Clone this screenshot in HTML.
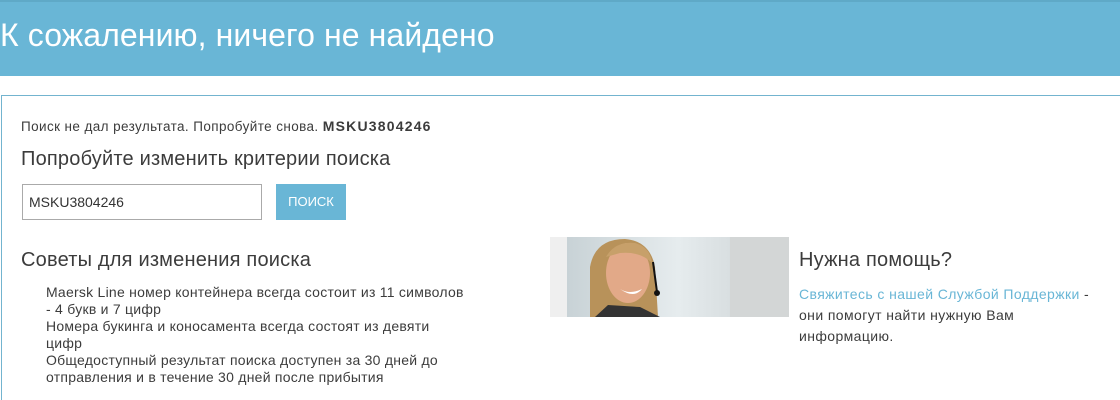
<!DOCTYPE html>
<html><head><meta charset="utf-8"><style>
*{margin:0;padding:0;box-sizing:border-box}
html,body{width:1120px;height:400px;overflow:hidden}
body{background:#fff;font-family:"Liberation Sans","DejaVu Sans",sans-serif;color:#3c3c3c;position:relative}
.hdr{position:absolute;left:0;top:0;width:1120px;height:76px;background:#69b6d6;border-top:2px solid #5fa9c7}
.hdr h1{position:absolute;left:0;top:15px;font-weight:normal;font-size:32px;color:#fff;letter-spacing:0.1px}
.box{position:absolute;left:1px;top:95px;width:1119px;height:305px;border:1px solid #73b4cf;border-right:none;border-bottom:none}
.t{position:absolute;white-space:nowrap}
.inp{position:absolute;left:22px;top:184px;width:240px;height:36px;border:1px solid #aaa;font-size:14px;padding:9px 6px;color:#333}
.btn{position:absolute;left:276px;top:184px;width:70px;height:36px;background:#69b6d6;color:#fff;font-size:13px;text-align:center;line-height:36px}
.ul{position:absolute;left:46px;top:284px;font-size:14px;line-height:17px;letter-spacing:0.25px;white-space:nowrap}
.img{position:absolute;left:550px;top:237px;width:239px;height:80px;background:#efefef}
</style></head><body>
<div class="hdr"><h1>К сожалению, ничего не найдено</h1></div>
<div class="box"></div>
<div class="t" style="left:21px;top:118px;font-size:13.5px;letter-spacing:0.4px">Поиск не дал результата. Попробуйте снова. <b style="font-size:14px;letter-spacing:1.2px">MSKU3804246</b></div>
<div class="t" style="left:21px;top:148px;font-size:20px;letter-spacing:0.2px">Попробуйте изменить критерии поиска</div>
<div class="inp">MSKU3804246</div>
<div class="btn">ПОИСК</div>
<div class="t" style="left:21px;top:249px;font-size:20px;letter-spacing:0.2px">Советы для изменения поиска</div>
<div class="ul">Maersk Line номер контейнера всегда состоит из 11 символов<br>- 4 букв и 7 цифр<br>Номера букинга и коносамента всегда состоят из девяти<br>цифр<br>Общедоступный результат поиска доступен за 30 дней до<br>отправления и в течение 30 дней после прибытия</div>
<div class="img"><svg width="239" height="80" viewBox="0 0 239 80" style="position:absolute;left:0;top:0">
<defs><linearGradient id="bg" x1="0" x2="1"><stop offset="0" stop-color="#c8d2d6"/><stop offset="0.5" stop-color="#e6ecee"/><stop offset="1" stop-color="#c9cfd1"/></linearGradient></defs>
<rect x="17" y="0" width="222" height="80" fill="url(#bg)"/>
<rect x="180" y="0" width="59" height="80" fill="#d3d6d6"/>
<path d="M40 80 L40 30 Q45 2 75 2 Q100 4 105 30 L108 80 Z" fill="#b8925a"/>
<ellipse cx="78" cy="36" rx="22" ry="30" fill="#e2a988"/>
<path d="M56 20 Q65 4 85 6 Q100 10 102 26 Q90 14 70 16 Z" fill="#c7a06a"/>
<path d="M70 52 Q80 58 92 52 Q84 62 70 52Z" fill="#fff"/>
<path d="M45 80 L58 68 L90 70 L110 80Z" fill="#333"/>
<path d="M103 25 L107 55" stroke="#111" stroke-width="2" fill="none"/>
<circle cx="107" cy="56" r="3" fill="#111"/>
</svg></div>
<div class="t" style="left:799px;top:249px;font-size:20px;letter-spacing:0.2px">Нужна помощь?</div>
<div style="position:absolute;left:799px;top:284px;white-space:nowrap;font-size:14px;line-height:21px;letter-spacing:0.4px"><span style="color:#69b6d6">Свяжитесь с нашей Службой Поддержки</span> -<br>они помогут найти нужную Вам<br>информацию.</div>
</body></html>
